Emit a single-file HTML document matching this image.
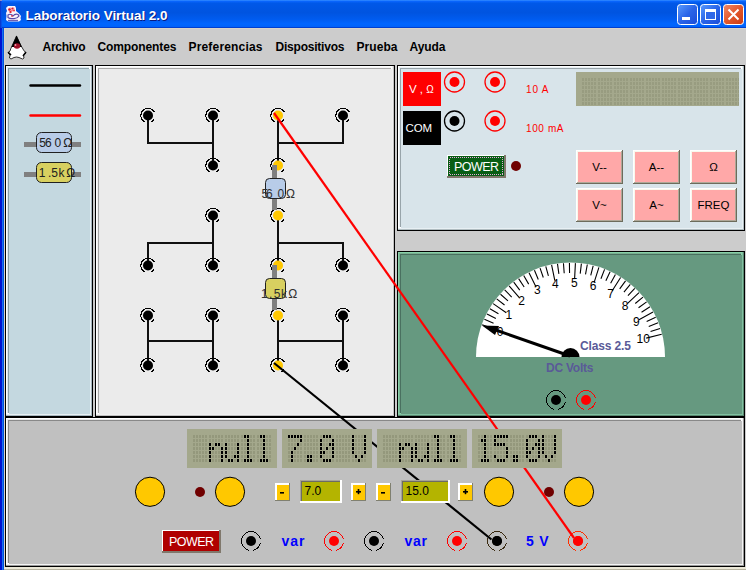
<!DOCTYPE html>
<html><head><meta charset="utf-8"><style>
html,body{margin:0;padding:0;width:746px;height:570px;overflow:hidden;background:#cccccc;font-family:"Liberation Sans",sans-serif}
</style></head><body>
<svg width="746" height="570" viewBox="0 0 746 570" style="position:absolute;left:0;top:0;font-family:'Liberation Sans',sans-serif"><rect x="0" y="0" width="746" height="570" fill="#cccccc" />
<defs>
<linearGradient id="tg" x1="0" y1="0" x2="0" y2="1">
<stop offset="0" stop-color="#3d95ff"/>
<stop offset="0.04" stop-color="#0a66ff"/>
<stop offset="0.12" stop-color="#0058e8"/>
<stop offset="0.45" stop-color="#0054e0"/>
<stop offset="0.7" stop-color="#005cf0"/>
<stop offset="0.85" stop-color="#0066ff"/>
<stop offset="0.95" stop-color="#0062fa"/>
<stop offset="1" stop-color="#0040d8"/>
</linearGradient>
<linearGradient id="lf" x1="0" y1="0" x2="1" y2="0">
<stop offset="0" stop-color="#0018c8"/>
<stop offset="0.5" stop-color="#0030e0"/>
<stop offset="1" stop-color="#1c6cf8"/>
</linearGradient>
<linearGradient id="bb" x1="0" y1="0" x2="1" y2="1">
<stop offset="0" stop-color="#5a9cff"/>
<stop offset="0.5" stop-color="#2a64e8"/>
<stop offset="1" stop-color="#1a4cd8"/>
</linearGradient>
<linearGradient id="cb" x1="0" y1="0" x2="1" y2="1">
<stop offset="0" stop-color="#f08a68"/>
<stop offset="0.5" stop-color="#e2582c"/>
<stop offset="1" stop-color="#cc3a10"/>
</linearGradient>
</defs>
<rect x="0" y="0" width="746" height="28" fill="url(#tg)" />
<rect x="0" y="28" width="2" height="542" fill="#0012d0" />
<rect x="2" y="28" width="1" height="542" fill="#1870f0" />
<rect x="3" y="28" width="1" height="542" fill="#0050e0" />
<rect x="0" y="27" width="746" height="1" fill="#0040d0" />
<rect x="0" y="0" width="1" height="28" fill="#0a3ad0" />
<rect x="1" y="0" width="1" height="28" fill="#0850e8" />
<rect x="0" y="0" width="2" height="1" fill="#8c8cc8" />
<rect x="4" y="28" width="742" height="1" fill="#d8d4c8" />
<rect x="4" y="567" width="742" height="3" fill="#ece9d8" />
<rect x="4" y="569" width="742" height="1" fill="#b8b4a0" />
<rect x="4" y="28" width="1" height="539" fill="#d8d4c8" />
<rect x="677.5" y="4.5" width="20" height="20" rx="3" fill="url(#bb)" stroke="#fff" stroke-width="1"/>
<rect x="700.5" y="4.5" width="20" height="20" rx="3" fill="url(#bb)" stroke="#fff" stroke-width="1"/>
<rect x="723.5" y="4.5" width="20" height="20" rx="3" fill="url(#cb)" stroke="#fff" stroke-width="1"/>
<rect x="682" y="17" width="8" height="3" fill="#fff" />
<rect x="705" y="9" width="11" height="11" fill="#fff" />
<rect x="706" y="12" width="9" height="7" fill="#3068e8" />
<path d="M728.5 9.5 L738.5 19.5 M738.5 9.5 L728.5 19.5" stroke="#fff" stroke-width="2"/>
<text x="26.5" y="21" font-size="13.5" fill="#0a1a80" font-weight="bold" text-anchor="start"  textLength="142" lengthAdjust="spacing">Laboratorio Virtual 2.0</text>
<text x="25.5" y="20" font-size="13.5" fill="#ffffff" font-weight="bold" text-anchor="start"  textLength="142" lengthAdjust="spacing">Laboratorio Virtual 2.0</text>
<g><path d="M6 8 L8 6 L15 6 L16 8 L16 11 L19 13.5 L21 16 L20.5 18 L21 20 L19 21.5 L8 21.5 L6 20 L6.5 16 L6 13 L7 11 Z" fill="#fbf4fb"/><path d="M8 9 L10 7 L12 8 L14 7 L15 9 L13 11 L11 13 L9 12 Z" fill="#f3c0c8"/><circle cx="9.5" cy="9.5" r="1.3" fill="#e01828"/><circle cx="12.5" cy="8.5" r="1.1" fill="#e01828"/><circle cx="14" cy="10.5" r="1" fill="#e83040"/><circle cx="10.5" cy="12" r="1.1" fill="#e01828"/><circle cx="12" cy="10.5" r="0.8" fill="#ff6070"/><path d="M8 15 Q10 13.5 12 15 L13 16 Q15 13.5 18 14.5 L19 16 Q17 19 13 18.5 Q10 19 8 17.5 Z" fill="none" stroke="#5848a8" stroke-width="1.2"/><path d="M8 20.5 L18 20.5" stroke="#7060b0" stroke-width="1.3"/><circle cx="12" cy="16" r="0.9" fill="#e04050"/></g>
<text x="42.5" y="51" font-size="12" fill="#000" font-weight="bold" text-anchor="start"  textLength="43" lengthAdjust="spacing">Archivo</text>
<text x="97.5" y="51" font-size="12" fill="#000" font-weight="bold" text-anchor="start"  textLength="79" lengthAdjust="spacing">Componentes</text>
<text x="188.5" y="51" font-size="12" fill="#000" font-weight="bold" text-anchor="start"  textLength="74" lengthAdjust="spacing">Preferencias</text>
<text x="275.5" y="51" font-size="12" fill="#000" font-weight="bold" text-anchor="start"  textLength="69" lengthAdjust="spacing">Dispositivos</text>
<text x="356.5" y="51" font-size="12" fill="#000" font-weight="bold" text-anchor="start"  textLength="41" lengthAdjust="spacing">Prueba</text>
<text x="409.5" y="51" font-size="12" fill="#000" font-weight="bold" text-anchor="start"  textLength="36" lengthAdjust="spacing">Ayuda</text>
<path d="M16.5 36 L12 46 Q10.5 49 10 51 L8 53 L10 55 L9.5 58 L11 59 L14 57.5 Q16.5 56.5 19 57.5 L22.5 59 L24 58 L23.5 55 L26 53 L23.5 50 Q22.5 48 21 46 Z" fill="#fff" stroke="#000" stroke-width="0.8"/><path d="M16.5 35.5 L11.5 47 L22 47 Z" fill="#000"/><ellipse cx="17" cy="46" rx="3.2" ry="2.8" fill="#a01028"/><circle cx="15.5" cy="45" r="0.9" fill="#e8a0b0"/><path d="M8 52 L11 55 M26 52 L23 56" stroke="#000" stroke-width="1.5"/>
<rect x="5" y="65" width="88" height="352" fill="#000" />
<rect x="6" y="66" width="86" height="350" fill="#a8b8c0" />
<rect x="6" y="66" width="85" height="349" fill="#e8f0f4" />
<rect x="6" y="66" width="84" height="348" fill="#ffffff" />
<rect x="7" y="67" width="82" height="346" fill="#dceaf0" />
<rect x="8" y="68" width="81" height="345" fill="#8ca0a8" />
<rect x="9" y="69" width="81" height="345" fill="#c4d8e0" />
<rect x="95" y="65" width="300" height="352" fill="#000" />
<rect x="96" y="66" width="298" height="350" fill="#c0c0c0" />
<rect x="96" y="66" width="297" height="349" fill="#f0f0f0" />
<rect x="96" y="66" width="296" height="348" fill="#ffffff" />
<rect x="97" y="67" width="294" height="346" fill="#f4f4f4" />
<rect x="98" y="68" width="293" height="345" fill="#a8a8a8" />
<rect x="99" y="69" width="293" height="345" fill="#ebebeb" />
<rect x="397" y="65" width="348" height="166" fill="#000" />
<rect x="398" y="66" width="346" height="164" fill="#b0bcc0" />
<rect x="398" y="66" width="345" height="163" fill="#e8f0f4" />
<rect x="398" y="66" width="344" height="162" fill="#ffffff" />
<rect x="399" y="67" width="342" height="160" fill="#e8f0f4" />
<rect x="400" y="68" width="341" height="159" fill="#98a4aa" />
<rect x="401" y="69" width="341" height="159" fill="#d8e4ea" />
<rect x="397" y="251" width="348" height="166" fill="#000" />
<rect x="398" y="252" width="346" height="164" fill="#5a8870" />
<rect x="398" y="252" width="345" height="163" fill="#80c0a0" />
<rect x="398" y="252" width="344" height="162" fill="#88d0a8" />
<rect x="399" y="253" width="342" height="160" fill="#78b090" />
<rect x="400" y="254" width="341" height="159" fill="#4a7060" />
<rect x="401" y="255" width="341" height="159" fill="#669980" />
<rect x="5" y="417" width="740" height="150" fill="#000" />
<rect x="6" y="418" width="738" height="148" fill="#989898" />
<rect x="6" y="418" width="737" height="147" fill="#f4f4f4" />
<rect x="6" y="418" width="736" height="146" fill="#ffffff" />
<rect x="7" y="419" width="734" height="144" fill="#e8e8e8" />
<rect x="8" y="420" width="733" height="143" fill="#888888" />
<rect x="9" y="421" width="733" height="143" fill="#c0c0c0" />
<line x1="30.5" y1="85.5" x2="80" y2="85.5" stroke="#000" stroke-width="2.4" stroke-linecap="round"/>
<line x1="30.5" y1="115.5" x2="80" y2="115.5" stroke="#ff0000" stroke-width="2.4" stroke-linecap="round"/>
<rect x="24" y="142" width="57" height="5" fill="#808080" />
<rect x="36.5" y="132.5" width="35" height="20" rx="5" fill="#b8cce8" stroke="#202020" stroke-width="1"/>
<text x="39.3 45 54.6 63.2" y="147" font-size="12" fill="#202020">560Ω</text>
<rect x="24" y="172" width="57" height="5" fill="#808080" />
<rect x="36.5" y="162.5" width="35" height="20" rx="5" fill="#d8d060" stroke="#202020" stroke-width="1"/>
<text x="38.8 48 51.2 58.6 66.2" y="177" font-size="12" fill="#202020">1.5kΩ</text>
<line x1="148" y1="115" x2="148" y2="143" stroke="#101010" stroke-width="2" stroke-linecap="square"/>
<line x1="148" y1="143" x2="213" y2="143" stroke="#101010" stroke-width="2" stroke-linecap="square"/>
<line x1="213" y1="115" x2="213" y2="165" stroke="#101010" stroke-width="2" stroke-linecap="square"/>
<line x1="278" y1="115" x2="278" y2="165" stroke="#101010" stroke-width="2" stroke-linecap="square"/>
<line x1="278" y1="143" x2="343" y2="143" stroke="#101010" stroke-width="2" stroke-linecap="square"/>
<line x1="343" y1="143" x2="343" y2="115" stroke="#101010" stroke-width="2" stroke-linecap="square"/>
<line x1="213" y1="215" x2="213" y2="265" stroke="#101010" stroke-width="2" stroke-linecap="square"/>
<line x1="148" y1="243" x2="213" y2="243" stroke="#101010" stroke-width="2" stroke-linecap="square"/>
<line x1="148" y1="243" x2="148" y2="265" stroke="#101010" stroke-width="2" stroke-linecap="square"/>
<line x1="278" y1="215" x2="278" y2="265" stroke="#101010" stroke-width="2" stroke-linecap="square"/>
<line x1="278" y1="243" x2="343" y2="243" stroke="#101010" stroke-width="2" stroke-linecap="square"/>
<line x1="343" y1="243" x2="343" y2="265" stroke="#101010" stroke-width="2" stroke-linecap="square"/>
<line x1="148" y1="315" x2="148" y2="365" stroke="#101010" stroke-width="2" stroke-linecap="square"/>
<line x1="213" y1="315" x2="213" y2="365" stroke="#101010" stroke-width="2" stroke-linecap="square"/>
<line x1="148" y1="341" x2="213" y2="341" stroke="#101010" stroke-width="2" stroke-linecap="square"/>
<line x1="278" y1="315" x2="278" y2="365" stroke="#101010" stroke-width="2" stroke-linecap="square"/>
<line x1="343" y1="315" x2="343" y2="365" stroke="#101010" stroke-width="2" stroke-linecap="square"/>
<line x1="278" y1="341" x2="343" y2="341" stroke="#101010" stroke-width="2" stroke-linecap="square"/>
<path d="M154.53 118.54 A7.2 7.2 0 0 1 151.60 121.74 M144.40 121.74 A7.2 7.2 0 1 1 154.53 112.46" fill="none" stroke="#000" stroke-width="1" shape-rendering="crispEdges"/>
<circle cx="148" cy="115.5" r="5" fill="#000" stroke="none" stroke-width="1" />
<path d="M219.53 118.54 A7.2 7.2 0 0 1 216.60 121.74 M209.40 121.74 A7.2 7.2 0 1 1 219.53 112.46" fill="none" stroke="#000" stroke-width="1" shape-rendering="crispEdges"/>
<circle cx="213" cy="115.5" r="5" fill="#000" stroke="none" stroke-width="1" />
<path d="M284.53 118.54 A7.2 7.2 0 0 1 281.60 121.74 M274.40 121.74 A7.2 7.2 0 1 1 284.53 112.46" fill="none" stroke="#000" stroke-width="1" shape-rendering="crispEdges"/>
<circle cx="278" cy="115.5" r="5" fill="#ffc800" stroke="none" stroke-width="1" />
<path d="M349.53 118.54 A7.2 7.2 0 0 1 346.60 121.74 M339.40 121.74 A7.2 7.2 0 1 1 349.53 112.46" fill="none" stroke="#000" stroke-width="1" shape-rendering="crispEdges"/>
<circle cx="343" cy="115.5" r="5" fill="#000" stroke="none" stroke-width="1" />
<path d="M154.53 268.54 A7.2 7.2 0 0 1 151.60 271.74 M144.40 271.74 A7.2 7.2 0 1 1 154.53 262.46" fill="none" stroke="#000" stroke-width="1" shape-rendering="crispEdges"/>
<circle cx="148" cy="265.5" r="5" fill="#000" stroke="none" stroke-width="1" />
<path d="M219.53 268.54 A7.2 7.2 0 0 1 216.60 271.74 M209.40 271.74 A7.2 7.2 0 1 1 219.53 262.46" fill="none" stroke="#000" stroke-width="1" shape-rendering="crispEdges"/>
<circle cx="213" cy="265.5" r="5" fill="#000" stroke="none" stroke-width="1" />
<path d="M284.53 268.54 A7.2 7.2 0 0 1 281.60 271.74 M274.40 271.74 A7.2 7.2 0 1 1 284.53 262.46" fill="none" stroke="#000" stroke-width="1" shape-rendering="crispEdges"/>
<circle cx="278" cy="265.5" r="5" fill="#ffc800" stroke="none" stroke-width="1" />
<path d="M349.53 268.54 A7.2 7.2 0 0 1 346.60 271.74 M339.40 271.74 A7.2 7.2 0 1 1 349.53 262.46" fill="none" stroke="#000" stroke-width="1" shape-rendering="crispEdges"/>
<circle cx="343" cy="265.5" r="5" fill="#000" stroke="none" stroke-width="1" />
<path d="M154.53 318.54 A7.2 7.2 0 0 1 151.60 321.74 M144.40 321.74 A7.2 7.2 0 1 1 154.53 312.46" fill="none" stroke="#000" stroke-width="1" shape-rendering="crispEdges"/>
<circle cx="148" cy="315.5" r="5" fill="#000" stroke="none" stroke-width="1" />
<path d="M219.53 318.54 A7.2 7.2 0 0 1 216.60 321.74 M209.40 321.74 A7.2 7.2 0 1 1 219.53 312.46" fill="none" stroke="#000" stroke-width="1" shape-rendering="crispEdges"/>
<circle cx="213" cy="315.5" r="5" fill="#000" stroke="none" stroke-width="1" />
<path d="M284.53 318.54 A7.2 7.2 0 0 1 281.60 321.74 M274.40 321.74 A7.2 7.2 0 1 1 284.53 312.46" fill="none" stroke="#000" stroke-width="1" shape-rendering="crispEdges"/>
<circle cx="278" cy="315.5" r="5" fill="#ffc800" stroke="none" stroke-width="1" />
<path d="M349.53 318.54 A7.2 7.2 0 0 1 346.60 321.74 M339.40 321.74 A7.2 7.2 0 1 1 349.53 312.46" fill="none" stroke="#000" stroke-width="1" shape-rendering="crispEdges"/>
<circle cx="343" cy="315.5" r="5" fill="#000" stroke="none" stroke-width="1" />
<path d="M154.53 368.54 A7.2 7.2 0 0 1 151.60 371.74 M144.40 371.74 A7.2 7.2 0 1 1 154.53 362.46" fill="none" stroke="#000" stroke-width="1" shape-rendering="crispEdges"/>
<circle cx="148" cy="365.5" r="5" fill="#000" stroke="none" stroke-width="1" />
<path d="M219.53 368.54 A7.2 7.2 0 0 1 216.60 371.74 M209.40 371.74 A7.2 7.2 0 1 1 219.53 362.46" fill="none" stroke="#000" stroke-width="1" shape-rendering="crispEdges"/>
<circle cx="213" cy="365.5" r="5" fill="#000" stroke="none" stroke-width="1" />
<path d="M284.53 368.54 A7.2 7.2 0 0 1 281.60 371.74 M274.40 371.74 A7.2 7.2 0 1 1 284.53 362.46" fill="none" stroke="#000" stroke-width="1" shape-rendering="crispEdges"/>
<circle cx="278" cy="365.5" r="5" fill="#ffc800" stroke="none" stroke-width="1" />
<path d="M349.53 368.54 A7.2 7.2 0 0 1 346.60 371.74 M339.40 371.74 A7.2 7.2 0 1 1 349.53 362.46" fill="none" stroke="#000" stroke-width="1" shape-rendering="crispEdges"/>
<circle cx="343" cy="365.5" r="5" fill="#000" stroke="none" stroke-width="1" />
<path d="M219.53 168.54 A7.2 7.2 0 0 1 216.60 171.74 M209.40 171.74 A7.2 7.2 0 1 1 219.53 162.46" fill="none" stroke="#000" stroke-width="1" shape-rendering="crispEdges"/>
<circle cx="213" cy="165.5" r="5" fill="#000" stroke="none" stroke-width="1" />
<path d="M284.53 168.54 A7.2 7.2 0 0 1 281.60 171.74 M274.40 171.74 A7.2 7.2 0 1 1 284.53 162.46" fill="none" stroke="#000" stroke-width="1" shape-rendering="crispEdges"/>
<circle cx="278" cy="165.5" r="5" fill="#ffc800" stroke="none" stroke-width="1" />
<path d="M219.53 218.54 A7.2 7.2 0 0 1 216.60 221.74 M209.40 221.74 A7.2 7.2 0 1 1 219.53 212.46" fill="none" stroke="#000" stroke-width="1" shape-rendering="crispEdges"/>
<circle cx="213" cy="215.5" r="5" fill="#000" stroke="none" stroke-width="1" />
<path d="M284.53 218.54 A7.2 7.2 0 0 1 281.60 221.74 M274.40 221.74 A7.2 7.2 0 1 1 284.53 212.46" fill="none" stroke="#000" stroke-width="1" shape-rendering="crispEdges"/>
<circle cx="278" cy="215.5" r="5" fill="#ffc800" stroke="none" stroke-width="1" />
<rect x="272" y="165" width="5" height="45" fill="#808080" />
<rect x="265.5" y="178.5" width="20" height="20" rx="4" fill="#b8cce8" stroke="#202020" stroke-width="1"/>
<text x="261.4 266 277.5 286" y="198" font-size="12" fill="#303030">560Ω</text>
<rect x="272" y="265" width="5" height="45" fill="#808080" />
<rect x="265.5" y="278.5" width="20" height="20" rx="4" fill="#d8d060" stroke="#202020" stroke-width="1"/>
<text x="261 269 273.8 281 288.3" y="298" font-size="12" fill="#303030">1.5kΩ</text>
<rect x="403" y="72" width="38" height="34" fill="#ff0000" />
<text x="409" y="93" font-size="11.5" fill="#fff" font-weight="normal" text-anchor="start" >V ,  <tspan font-size="10">Ω</tspan></text>
<rect x="403" y="111" width="38" height="34" fill="#000" />
<text x="405.5" y="132" font-size="11.5" fill="#fff" font-weight="normal" text-anchor="start"  textLength="26.5" lengthAdjust="spacing">COM</text>
<circle cx="454.5" cy="82" r="10" fill="none" stroke="#ff0000" stroke-width="1.3" />
<circle cx="454.5" cy="82" r="5" fill="#ff0000" stroke="none" stroke-width="1" />
<circle cx="495" cy="82" r="10" fill="none" stroke="#ff0000" stroke-width="1.3" />
<circle cx="495" cy="82" r="5" fill="#ff0000" stroke="none" stroke-width="1" />
<circle cx="454.5" cy="121" r="10" fill="none" stroke="#000" stroke-width="1.3" />
<circle cx="454.5" cy="121" r="5" fill="#000" stroke="none" stroke-width="1" />
<circle cx="495" cy="121" r="10" fill="none" stroke="#ff0000" stroke-width="1.3" />
<circle cx="495" cy="121" r="5" fill="#ff0000" stroke="none" stroke-width="1" />
<text x="526" y="93" font-size="10" fill="#ff0000" font-weight="normal" text-anchor="start"  textLength="22.5" lengthAdjust="spacing">10 A</text>
<text x="526" y="132" font-size="10" fill="#ff0000" font-weight="normal" text-anchor="start"  textLength="37.5" lengthAdjust="spacing">100 mA</text>
<rect x="447" y="155" width="59" height="23" fill="#80786c" />
<rect x="447" y="155" width="57" height="21" fill="#ffffff" />
<rect x="448" y="156" width="56" height="20" fill="#085e14" />
<rect x="449.5" y="157.5" width="53" height="17" fill="none" stroke="#e8a8e0" stroke-width="1" stroke-dasharray="1 1" shape-rendering="crispEdges"/>
<text x="454" y="171" font-size="12.5" fill="#fff" font-weight="normal" text-anchor="start"  textLength="45" lengthAdjust="spacing">POWER</text>
<circle cx="516" cy="166" r="5" fill="#700000" stroke="none" stroke-width="1" />
<rect x="576" y="72" width="163" height="34" fill="#a4a88c" />
<path d="M582 78h2v3h-2zM582 82h2v3h-2zM582 86h2v3h-2zM582 90h2v3h-2zM582 94h2v3h-2zM582 98h2v3h-2zM582 102h2v3h-2zM585 78h2v3h-2zM585 82h2v3h-2zM585 86h2v3h-2zM585 90h2v3h-2zM585 94h2v3h-2zM585 98h2v3h-2zM585 102h2v3h-2zM588 78h2v3h-2zM588 82h2v3h-2zM588 86h2v3h-2zM588 90h2v3h-2zM588 94h2v3h-2zM588 98h2v3h-2zM588 102h2v3h-2zM591 78h2v3h-2zM591 82h2v3h-2zM591 86h2v3h-2zM591 90h2v3h-2zM591 94h2v3h-2zM591 98h2v3h-2zM591 102h2v3h-2zM594 78h2v3h-2zM594 82h2v3h-2zM594 86h2v3h-2zM594 90h2v3h-2zM594 94h2v3h-2zM594 98h2v3h-2zM594 102h2v3h-2zM598 78h2v3h-2zM598 82h2v3h-2zM598 86h2v3h-2zM598 90h2v3h-2zM598 94h2v3h-2zM598 98h2v3h-2zM598 102h2v3h-2zM601 78h2v3h-2zM601 82h2v3h-2zM601 86h2v3h-2zM601 90h2v3h-2zM601 94h2v3h-2zM601 98h2v3h-2zM601 102h2v3h-2zM604 78h2v3h-2zM604 82h2v3h-2zM604 86h2v3h-2zM604 90h2v3h-2zM604 94h2v3h-2zM604 98h2v3h-2zM604 102h2v3h-2zM607 78h2v3h-2zM607 82h2v3h-2zM607 86h2v3h-2zM607 90h2v3h-2zM607 94h2v3h-2zM607 98h2v3h-2zM607 102h2v3h-2zM610 78h2v3h-2zM610 82h2v3h-2zM610 86h2v3h-2zM610 90h2v3h-2zM610 94h2v3h-2zM610 98h2v3h-2zM610 102h2v3h-2zM614 78h2v3h-2zM614 82h2v3h-2zM614 86h2v3h-2zM614 90h2v3h-2zM614 94h2v3h-2zM614 98h2v3h-2zM614 102h2v3h-2zM617 78h2v3h-2zM617 82h2v3h-2zM617 86h2v3h-2zM617 90h2v3h-2zM617 94h2v3h-2zM617 98h2v3h-2zM617 102h2v3h-2zM620 78h2v3h-2zM620 82h2v3h-2zM620 86h2v3h-2zM620 90h2v3h-2zM620 94h2v3h-2zM620 98h2v3h-2zM620 102h2v3h-2zM623 78h2v3h-2zM623 82h2v3h-2zM623 86h2v3h-2zM623 90h2v3h-2zM623 94h2v3h-2zM623 98h2v3h-2zM623 102h2v3h-2zM626 78h2v3h-2zM626 82h2v3h-2zM626 86h2v3h-2zM626 90h2v3h-2zM626 94h2v3h-2zM626 98h2v3h-2zM626 102h2v3h-2zM630 78h2v3h-2zM630 82h2v3h-2zM630 86h2v3h-2zM630 90h2v3h-2zM630 94h2v3h-2zM630 98h2v3h-2zM630 102h2v3h-2zM633 78h2v3h-2zM633 82h2v3h-2zM633 86h2v3h-2zM633 90h2v3h-2zM633 94h2v3h-2zM633 98h2v3h-2zM633 102h2v3h-2zM636 78h2v3h-2zM636 82h2v3h-2zM636 86h2v3h-2zM636 90h2v3h-2zM636 94h2v3h-2zM636 98h2v3h-2zM636 102h2v3h-2zM639 78h2v3h-2zM639 82h2v3h-2zM639 86h2v3h-2zM639 90h2v3h-2zM639 94h2v3h-2zM639 98h2v3h-2zM639 102h2v3h-2zM642 78h2v3h-2zM642 82h2v3h-2zM642 86h2v3h-2zM642 90h2v3h-2zM642 94h2v3h-2zM642 98h2v3h-2zM642 102h2v3h-2zM646 78h2v3h-2zM646 82h2v3h-2zM646 86h2v3h-2zM646 90h2v3h-2zM646 94h2v3h-2zM646 98h2v3h-2zM646 102h2v3h-2zM649 78h2v3h-2zM649 82h2v3h-2zM649 86h2v3h-2zM649 90h2v3h-2zM649 94h2v3h-2zM649 98h2v3h-2zM649 102h2v3h-2zM652 78h2v3h-2zM652 82h2v3h-2zM652 86h2v3h-2zM652 90h2v3h-2zM652 94h2v3h-2zM652 98h2v3h-2zM652 102h2v3h-2zM655 78h2v3h-2zM655 82h2v3h-2zM655 86h2v3h-2zM655 90h2v3h-2zM655 94h2v3h-2zM655 98h2v3h-2zM655 102h2v3h-2zM658 78h2v3h-2zM658 82h2v3h-2zM658 86h2v3h-2zM658 90h2v3h-2zM658 94h2v3h-2zM658 98h2v3h-2zM658 102h2v3h-2zM662 78h2v3h-2zM662 82h2v3h-2zM662 86h2v3h-2zM662 90h2v3h-2zM662 94h2v3h-2zM662 98h2v3h-2zM662 102h2v3h-2zM665 78h2v3h-2zM665 82h2v3h-2zM665 86h2v3h-2zM665 90h2v3h-2zM665 94h2v3h-2zM665 98h2v3h-2zM665 102h2v3h-2zM668 78h2v3h-2zM668 82h2v3h-2zM668 86h2v3h-2zM668 90h2v3h-2zM668 94h2v3h-2zM668 98h2v3h-2zM668 102h2v3h-2zM671 78h2v3h-2zM671 82h2v3h-2zM671 86h2v3h-2zM671 90h2v3h-2zM671 94h2v3h-2zM671 98h2v3h-2zM671 102h2v3h-2zM674 78h2v3h-2zM674 82h2v3h-2zM674 86h2v3h-2zM674 90h2v3h-2zM674 94h2v3h-2zM674 98h2v3h-2zM674 102h2v3h-2zM678 78h2v3h-2zM678 82h2v3h-2zM678 86h2v3h-2zM678 90h2v3h-2zM678 94h2v3h-2zM678 98h2v3h-2zM678 102h2v3h-2zM681 78h2v3h-2zM681 82h2v3h-2zM681 86h2v3h-2zM681 90h2v3h-2zM681 94h2v3h-2zM681 98h2v3h-2zM681 102h2v3h-2zM684 78h2v3h-2zM684 82h2v3h-2zM684 86h2v3h-2zM684 90h2v3h-2zM684 94h2v3h-2zM684 98h2v3h-2zM684 102h2v3h-2zM687 78h2v3h-2zM687 82h2v3h-2zM687 86h2v3h-2zM687 90h2v3h-2zM687 94h2v3h-2zM687 98h2v3h-2zM687 102h2v3h-2zM690 78h2v3h-2zM690 82h2v3h-2zM690 86h2v3h-2zM690 90h2v3h-2zM690 94h2v3h-2zM690 98h2v3h-2zM690 102h2v3h-2zM694 78h2v3h-2zM694 82h2v3h-2zM694 86h2v3h-2zM694 90h2v3h-2zM694 94h2v3h-2zM694 98h2v3h-2zM694 102h2v3h-2zM697 78h2v3h-2zM697 82h2v3h-2zM697 86h2v3h-2zM697 90h2v3h-2zM697 94h2v3h-2zM697 98h2v3h-2zM697 102h2v3h-2zM700 78h2v3h-2zM700 82h2v3h-2zM700 86h2v3h-2zM700 90h2v3h-2zM700 94h2v3h-2zM700 98h2v3h-2zM700 102h2v3h-2zM703 78h2v3h-2zM703 82h2v3h-2zM703 86h2v3h-2zM703 90h2v3h-2zM703 94h2v3h-2zM703 98h2v3h-2zM703 102h2v3h-2zM706 78h2v3h-2zM706 82h2v3h-2zM706 86h2v3h-2zM706 90h2v3h-2zM706 94h2v3h-2zM706 98h2v3h-2zM706 102h2v3h-2zM710 78h2v3h-2zM710 82h2v3h-2zM710 86h2v3h-2zM710 90h2v3h-2zM710 94h2v3h-2zM710 98h2v3h-2zM710 102h2v3h-2zM713 78h2v3h-2zM713 82h2v3h-2zM713 86h2v3h-2zM713 90h2v3h-2zM713 94h2v3h-2zM713 98h2v3h-2zM713 102h2v3h-2zM716 78h2v3h-2zM716 82h2v3h-2zM716 86h2v3h-2zM716 90h2v3h-2zM716 94h2v3h-2zM716 98h2v3h-2zM716 102h2v3h-2zM719 78h2v3h-2zM719 82h2v3h-2zM719 86h2v3h-2zM719 90h2v3h-2zM719 94h2v3h-2zM719 98h2v3h-2zM719 102h2v3h-2zM722 78h2v3h-2zM722 82h2v3h-2zM722 86h2v3h-2zM722 90h2v3h-2zM722 94h2v3h-2zM722 98h2v3h-2zM722 102h2v3h-2zM726 78h2v3h-2zM726 82h2v3h-2zM726 86h2v3h-2zM726 90h2v3h-2zM726 94h2v3h-2zM726 98h2v3h-2zM726 102h2v3h-2zM729 78h2v3h-2zM729 82h2v3h-2zM729 86h2v3h-2zM729 90h2v3h-2zM729 94h2v3h-2zM729 98h2v3h-2zM729 102h2v3h-2zM732 78h2v3h-2zM732 82h2v3h-2zM732 86h2v3h-2zM732 90h2v3h-2zM732 94h2v3h-2zM732 98h2v3h-2zM732 102h2v3h-2zM735 78h2v3h-2zM735 82h2v3h-2zM735 86h2v3h-2zM735 90h2v3h-2zM735 94h2v3h-2zM735 98h2v3h-2zM735 102h2v3h-2zM738 78h1v3h-1zM738 82h1v3h-1zM738 86h1v3h-1zM738 90h1v3h-1zM738 94h1v3h-1zM738 98h1v3h-1zM738 102h1v3h-1z" fill="#989c80"/>
<rect x="576" y="150" width="47" height="34" fill="#6c6c5c" />
<rect x="576" y="150" width="46" height="33" fill="#ffffff" />
<rect x="577" y="151" width="45" height="32" fill="#b0a898" />
<rect x="577" y="151" width="44" height="31" fill="#f8f8ec" />
<rect x="578" y="152" width="43" height="30" fill="#ffa8a8" />
<text x="599.5" y="171.0" font-size="11.5" fill="#000" font-weight="normal" text-anchor="middle" >V--</text>
<rect x="576" y="188" width="47" height="34" fill="#6c6c5c" />
<rect x="576" y="188" width="46" height="33" fill="#ffffff" />
<rect x="577" y="189" width="45" height="32" fill="#b0a898" />
<rect x="577" y="189" width="44" height="31" fill="#f8f8ec" />
<rect x="578" y="190" width="43" height="30" fill="#ffa8a8" />
<text x="599.5" y="209.0" font-size="11.5" fill="#000" font-weight="normal" text-anchor="middle" >V~</text>
<rect x="633" y="150" width="47" height="34" fill="#6c6c5c" />
<rect x="633" y="150" width="46" height="33" fill="#ffffff" />
<rect x="634" y="151" width="45" height="32" fill="#b0a898" />
<rect x="634" y="151" width="44" height="31" fill="#f8f8ec" />
<rect x="635" y="152" width="43" height="30" fill="#ffa8a8" />
<text x="656.5" y="171.0" font-size="11.5" fill="#000" font-weight="normal" text-anchor="middle" >A--</text>
<rect x="633" y="188" width="47" height="34" fill="#6c6c5c" />
<rect x="633" y="188" width="46" height="33" fill="#ffffff" />
<rect x="634" y="189" width="45" height="32" fill="#b0a898" />
<rect x="634" y="189" width="44" height="31" fill="#f8f8ec" />
<rect x="635" y="190" width="43" height="30" fill="#ffa8a8" />
<text x="656.5" y="209.0" font-size="11.5" fill="#000" font-weight="normal" text-anchor="middle" >A~</text>
<rect x="690" y="150" width="47" height="34" fill="#6c6c5c" />
<rect x="690" y="150" width="46" height="33" fill="#ffffff" />
<rect x="691" y="151" width="45" height="32" fill="#b0a898" />
<rect x="691" y="151" width="44" height="31" fill="#f8f8ec" />
<rect x="692" y="152" width="43" height="30" fill="#ffa8a8" />
<text x="713.5" y="171.0" font-size="11.5" fill="#000" font-weight="normal" text-anchor="middle" >Ω</text>
<rect x="690" y="188" width="47" height="34" fill="#6c6c5c" />
<rect x="690" y="188" width="46" height="33" fill="#ffffff" />
<rect x="691" y="189" width="45" height="32" fill="#b0a898" />
<rect x="691" y="189" width="44" height="31" fill="#f8f8ec" />
<rect x="692" y="190" width="43" height="30" fill="#ffa8a8" />
<text x="713.5" y="209.0" font-size="11.5" fill="#000" font-weight="normal" text-anchor="middle" >FREQ</text>
<path d="M476.0 357 A94.5 94.5 0 0 1 665.0 357 Z" fill="#fff"/>
<path d="M497.20 330.32L482.17 324.85M493.55 323.30L484.39 319.29M495.86 318.47L486.97 313.89M498.46 313.80L489.88 308.66M506.30 312.71L493.13 303.62M504.53 305.00L496.68 298.81M507.98 300.90L500.53 294.22M511.68 297.04L504.67 289.90M519.53 297.95L509.08 285.84M519.77 290.05L513.73 282.08M524.14 286.95L518.62 278.61M528.69 284.14L523.71 275.47M536.06 287.01L529.00 272.66M538.29 279.42L534.45 270.19M543.29 277.53L540.05 268.07M548.41 275.96L545.78 266.31M554.82 280.59L551.60 264.92M558.88 273.81L557.50 263.90M564.20 273.24L563.45 263.26M569.55 273.01L569.43 263.01M574.58 279.11L575.42 263.13M580.23 273.57L581.39 263.63M585.52 274.35L587.31 264.51M590.75 275.48L593.16 265.77M594.08 282.65L598.92 267.40M600.94 278.71L604.57 269.39M605.87 280.81L610.08 271.74M610.65 283.21L615.42 274.43M612.06 291.00L620.59 277.46M619.70 288.91L625.55 280.81M623.93 292.18L630.29 284.47M627.95 295.72L634.79 288.42M627.36 303.61L639.02 292.65M635.27 303.51L642.98 297.15M638.54 307.74L646.64 301.88M641.54 312.18L650.00 306.84M638.98 319.66L653.03 312.00M646.66 321.57L655.73 317.35M648.76 326.49L658.08 322.85M650.55 331.53L660.08 328.50M646.18 338.13L661.71 334.26" stroke="#000" stroke-width="1.1" fill="none"/>
<text x="500.0" y="335.8" font-size="12" fill="#000" font-weight="normal" text-anchor="middle" >0</text>
<text x="508.8" y="318.9" font-size="12" fill="#000" font-weight="normal" text-anchor="middle" >1</text>
<text x="521.5" y="304.7" font-size="12" fill="#000" font-weight="normal" text-anchor="middle" >2</text>
<text x="537.4" y="294.2" font-size="12" fill="#000" font-weight="normal" text-anchor="middle" >3</text>
<text x="555.4" y="288.0" font-size="12" fill="#000" font-weight="normal" text-anchor="middle" >4</text>
<text x="574.4" y="286.6" font-size="12" fill="#000" font-weight="normal" text-anchor="middle" >5</text>
<text x="593.2" y="290.0" font-size="12" fill="#000" font-weight="normal" text-anchor="middle" >6</text>
<text x="610.5" y="298.0" font-size="12" fill="#000" font-weight="normal" text-anchor="middle" >7</text>
<text x="625.2" y="310.2" font-size="12" fill="#000" font-weight="normal" text-anchor="middle" >8</text>
<text x="636.3" y="325.6" font-size="12" fill="#000" font-weight="normal" text-anchor="middle" >9</text>
<text x="643.3" y="343.4" font-size="12" fill="#000" font-weight="normal" text-anchor="middle" >10</text>
<text x="580" y="350" font-size="12" fill="#5a5a98" font-weight="bold" text-anchor="start"  textLength="51" lengthAdjust="spacing">Class 2.5</text>
<text x="546" y="372" font-size="12" fill="#5a5a98" font-weight="bold" text-anchor="start"  textLength="47.5" lengthAdjust="spacing">DC Volts</text>
<line x1="570" y1="356" x2="490" y2="328" stroke="#000" stroke-width="3"/>
<path d="M482 325.5 L499 326 L495 335 Z" fill="#000"/>
<path d="M561.5 357 A9 9 0 0 1 579.5 357 Z" fill="#000"/>
<path d="M565.29 401.98 A9.5 9.5 0 0 1 557.98 409.29 M554.02 409.29 A9.5 9.5 0 1 1 565.29 398.02" fill="none" stroke="#000" stroke-width="1" shape-rendering="crispEdges"/>
<circle cx="556" cy="400" r="5" fill="#000" stroke="none" stroke-width="1" />
<path d="M595.29 401.98 A9.5 9.5 0 0 1 587.98 409.29 M584.02 409.29 A9.5 9.5 0 1 1 595.29 398.02" fill="none" stroke="#ff0000" stroke-width="1" shape-rendering="crispEdges"/>
<circle cx="586" cy="400" r="5" fill="#ff0000" stroke="none" stroke-width="1" />
<circle cx="150" cy="491.8" r="14.6" fill="#ffc800" stroke="#000" stroke-width="1" />
<circle cx="230" cy="491.8" r="14.6" fill="#ffc800" stroke="#000" stroke-width="1" />
<circle cx="499" cy="491.8" r="14.6" fill="#ffc800" stroke="#000" stroke-width="1" />
<circle cx="579" cy="491.8" r="14.6" fill="#ffc800" stroke="#000" stroke-width="1" />
<circle cx="200" cy="492" r="5" fill="#700000" stroke="none" stroke-width="1" />
<circle cx="549" cy="492" r="5" fill="#700000" stroke="none" stroke-width="1" />
<rect x="275" y="483" width="15" height="18" fill="#808070" />
<rect x="275" y="483" width="14" height="17" fill="#ffffff" />
<rect x="277" y="485" width="12" height="15" fill="#ffc800" />
<rect x="280" y="492" width="4" height="1.6" fill="#000" />
<rect x="351" y="483" width="15" height="18" fill="#808070" />
<rect x="351" y="483" width="14" height="17" fill="#ffffff" />
<rect x="353" y="485" width="12" height="15" fill="#ffc800" />
<rect x="356" y="491" width="5" height="1.6" fill="#000" />
<rect x="357.7" y="489" width="1.6" height="5.2" fill="#000" />
<rect x="376" y="483" width="15" height="18" fill="#808070" />
<rect x="376" y="483" width="14" height="17" fill="#ffffff" />
<rect x="378" y="485" width="12" height="15" fill="#ffc800" />
<rect x="381" y="492" width="4" height="1.6" fill="#000" />
<rect x="458" y="483" width="15" height="18" fill="#808070" />
<rect x="458" y="483" width="14" height="17" fill="#ffffff" />
<rect x="460" y="485" width="12" height="15" fill="#ffc800" />
<rect x="463" y="491" width="5" height="1.6" fill="#000" />
<rect x="464.7" y="489" width="1.6" height="5.2" fill="#000" />
<rect x="162" y="530" width="59" height="23" fill="#80786c" />
<rect x="162" y="530" width="57" height="21" fill="#ffffff" />
<rect x="163" y="531" width="56" height="20" fill="#b00000" />
<text x="169" y="546" font-size="12.5" fill="#fff" font-weight="normal" text-anchor="start"  textLength="45" lengthAdjust="spacing">POWER</text>
<path d="M260.29 542.98 A9.5 9.5 0 0 1 252.98 550.29 M249.02 550.29 A9.5 9.5 0 1 1 260.29 539.02" fill="none" stroke="#000" stroke-width="1" shape-rendering="crispEdges"/>
<circle cx="251" cy="541" r="5" fill="#000" stroke="none" stroke-width="1" />
<path d="M343.29 542.98 A9.5 9.5 0 0 1 335.98 550.29 M332.02 550.29 A9.5 9.5 0 1 1 343.29 539.02" fill="none" stroke="#ff0000" stroke-width="1" shape-rendering="crispEdges"/>
<circle cx="334" cy="541" r="5" fill="#ff0000" stroke="none" stroke-width="1" />
<path d="M383.29 542.98 A9.5 9.5 0 0 1 375.98 550.29 M372.02 550.29 A9.5 9.5 0 1 1 383.29 539.02" fill="none" stroke="#000" stroke-width="1" shape-rendering="crispEdges"/>
<circle cx="374" cy="541" r="5" fill="#000" stroke="none" stroke-width="1" />
<path d="M466.29 542.98 A9.5 9.5 0 0 1 458.98 550.29 M455.02 550.29 A9.5 9.5 0 1 1 466.29 539.02" fill="none" stroke="#ff0000" stroke-width="1" shape-rendering="crispEdges"/>
<circle cx="457" cy="541" r="5" fill="#ff0000" stroke="none" stroke-width="1" />
<path d="M506.29 542.98 A9.5 9.5 0 0 1 498.98 550.29 M495.02 550.29 A9.5 9.5 0 1 1 506.29 539.02" fill="none" stroke="#3a2a10" stroke-width="1" shape-rendering="crispEdges"/>
<circle cx="497" cy="541" r="5" fill="#3a2a10" stroke="none" stroke-width="1" />
<circle cx="497" cy="541" r="5" fill="#000" stroke="none" stroke-width="1" />
<path d="M587.29 542.98 A9.5 9.5 0 0 1 579.98 550.29 M576.02 550.29 A9.5 9.5 0 1 1 587.29 539.02" fill="none" stroke="#ff3000" stroke-width="1" shape-rendering="crispEdges"/>
<circle cx="578" cy="541" r="5" fill="#ff3000" stroke="none" stroke-width="1" />
<circle cx="578" cy="541" r="5" fill="#ff0000" stroke="none" stroke-width="1" />
<text x="281.5" y="546" font-size="14" fill="#0000ff" font-weight="bold" text-anchor="start"  textLength="23" lengthAdjust="spacing">var</text>
<text x="404.5" y="546" font-size="14" fill="#0000ff" font-weight="bold" text-anchor="start"  textLength="22.5" lengthAdjust="spacing">var</text>
<text x="526" y="546" font-size="14" fill="#0000ff" font-weight="bold" text-anchor="start"  textLength="22.5" lengthAdjust="spacing">5 V</text>
<line x1="274" y1="113" x2="574" y2="538" stroke="#ff0000" stroke-width="2.2" />
<line x1="274" y1="363" x2="491.5" y2="539.5" stroke="#000" stroke-width="2.2" />
<rect x="187" y="429" width="90" height="39" fill="#a4a88c" />
<path d="M193 435h2v3h-2zM196 435h2v3h-2zM199 435h2v3h-2zM202 435h2v3h-2zM205 435h2v3h-2zM193 439h2v3h-2zM196 439h2v3h-2zM199 439h2v3h-2zM202 439h2v3h-2zM205 439h2v3h-2zM193 443h2v3h-2zM196 443h2v3h-2zM199 443h2v3h-2zM202 443h2v3h-2zM205 443h2v3h-2zM193 447h2v3h-2zM196 447h2v3h-2zM199 447h2v3h-2zM202 447h2v3h-2zM205 447h2v3h-2zM193 451h2v3h-2zM196 451h2v3h-2zM199 451h2v3h-2zM202 451h2v3h-2zM205 451h2v3h-2zM193 455h2v3h-2zM196 455h2v3h-2zM199 455h2v3h-2zM202 455h2v3h-2zM205 455h2v3h-2zM193 459h2v3h-2zM196 459h2v3h-2zM199 459h2v3h-2zM202 459h2v3h-2zM205 459h2v3h-2zM209 435h2v3h-2zM212 435h2v3h-2zM215 435h2v3h-2zM218 435h2v3h-2zM221 435h2v3h-2zM209 439h2v3h-2zM212 439h2v3h-2zM215 439h2v3h-2zM218 439h2v3h-2zM221 439h2v3h-2zM212 443h2v3h-2zM221 443h2v3h-2zM215 447h2v3h-2zM218 447h2v3h-2zM212 451h2v3h-2zM215 451h2v3h-2zM218 451h2v3h-2zM212 455h2v3h-2zM215 455h2v3h-2zM218 455h2v3h-2zM212 459h2v3h-2zM215 459h2v3h-2zM218 459h2v3h-2zM225 435h2v3h-2zM228 435h2v3h-2zM231 435h2v3h-2zM234 435h2v3h-2zM237 435h2v3h-2zM225 439h2v3h-2zM228 439h2v3h-2zM231 439h2v3h-2zM234 439h2v3h-2zM237 439h2v3h-2zM228 443h2v3h-2zM231 443h2v3h-2zM234 443h2v3h-2zM228 447h2v3h-2zM231 447h2v3h-2zM234 447h2v3h-2zM228 451h2v3h-2zM231 451h2v3h-2zM234 451h2v3h-2zM228 455h2v3h-2zM231 455h2v3h-2zM225 459h2v3h-2zM234 459h2v3h-2zM241 435h2v3h-2zM250 435h2v3h-2zM253 435h2v3h-2zM241 439h2v3h-2zM244 439h2v3h-2zM250 439h2v3h-2zM253 439h2v3h-2zM241 443h2v3h-2zM244 443h2v3h-2zM250 443h2v3h-2zM253 443h2v3h-2zM241 447h2v3h-2zM244 447h2v3h-2zM250 447h2v3h-2zM253 447h2v3h-2zM241 451h2v3h-2zM244 451h2v3h-2zM250 451h2v3h-2zM253 451h2v3h-2zM241 455h2v3h-2zM244 455h2v3h-2zM250 455h2v3h-2zM253 455h2v3h-2zM241 459h2v3h-2zM253 459h2v3h-2zM257 435h2v3h-2zM266 435h2v3h-2zM269 435h2v3h-2zM257 439h2v3h-2zM260 439h2v3h-2zM266 439h2v3h-2zM269 439h2v3h-2zM257 443h2v3h-2zM260 443h2v3h-2zM266 443h2v3h-2zM269 443h2v3h-2zM257 447h2v3h-2zM260 447h2v3h-2zM266 447h2v3h-2zM269 447h2v3h-2zM257 451h2v3h-2zM260 451h2v3h-2zM266 451h2v3h-2zM269 451h2v3h-2zM257 455h2v3h-2zM260 455h2v3h-2zM266 455h2v3h-2zM269 455h2v3h-2zM257 459h2v3h-2zM269 459h2v3h-2z" fill="#94987c"/>
<path d="M209 443h2v3h-2zM215 443h2v3h-2zM218 443h2v3h-2zM209 447h2v3h-2zM212 447h2v3h-2zM221 447h2v3h-2zM209 451h2v3h-2zM221 451h2v3h-2zM209 455h2v3h-2zM221 455h2v3h-2zM209 459h2v3h-2zM221 459h2v3h-2zM225 443h2v3h-2zM237 443h2v3h-2zM225 447h2v3h-2zM237 447h2v3h-2zM225 451h2v3h-2zM237 451h2v3h-2zM225 455h2v3h-2zM234 455h2v3h-2zM237 455h2v3h-2zM228 459h2v3h-2zM231 459h2v3h-2zM237 459h2v3h-2zM244 435h2v3h-2zM247 435h2v3h-2zM247 439h2v3h-2zM247 443h2v3h-2zM247 447h2v3h-2zM247 451h2v3h-2zM247 455h2v3h-2zM244 459h2v3h-2zM247 459h2v3h-2zM250 459h2v3h-2zM260 435h2v3h-2zM263 435h2v3h-2zM263 439h2v3h-2zM263 443h2v3h-2zM263 447h2v3h-2zM263 451h2v3h-2zM263 455h2v3h-2zM260 459h2v3h-2zM263 459h2v3h-2zM266 459h2v3h-2z" fill="#000"/>
<rect x="282" y="429" width="90" height="39" fill="#a4a88c" />
<path d="M288 439h2v3h-2zM291 439h2v3h-2zM294 439h2v3h-2zM297 439h2v3h-2zM288 443h2v3h-2zM291 443h2v3h-2zM294 443h2v3h-2zM300 443h2v3h-2zM288 447h2v3h-2zM291 447h2v3h-2zM297 447h2v3h-2zM300 447h2v3h-2zM288 451h2v3h-2zM294 451h2v3h-2zM297 451h2v3h-2zM300 451h2v3h-2zM288 455h2v3h-2zM294 455h2v3h-2zM297 455h2v3h-2zM300 455h2v3h-2zM288 459h2v3h-2zM294 459h2v3h-2zM297 459h2v3h-2zM300 459h2v3h-2zM304 435h2v3h-2zM307 435h2v3h-2zM310 435h2v3h-2zM313 435h2v3h-2zM316 435h2v3h-2zM304 439h2v3h-2zM307 439h2v3h-2zM310 439h2v3h-2zM313 439h2v3h-2zM316 439h2v3h-2zM304 443h2v3h-2zM307 443h2v3h-2zM310 443h2v3h-2zM313 443h2v3h-2zM316 443h2v3h-2zM304 447h2v3h-2zM307 447h2v3h-2zM310 447h2v3h-2zM313 447h2v3h-2zM316 447h2v3h-2zM304 451h2v3h-2zM307 451h2v3h-2zM310 451h2v3h-2zM313 451h2v3h-2zM316 451h2v3h-2zM304 455h2v3h-2zM313 455h2v3h-2zM316 455h2v3h-2zM304 459h2v3h-2zM313 459h2v3h-2zM316 459h2v3h-2zM320 435h2v3h-2zM332 435h2v3h-2zM323 439h2v3h-2zM326 439h2v3h-2zM329 439h2v3h-2zM323 443h2v3h-2zM326 443h2v3h-2zM323 447h2v3h-2zM329 447h2v3h-2zM326 451h2v3h-2zM329 451h2v3h-2zM323 455h2v3h-2zM326 455h2v3h-2zM329 455h2v3h-2zM320 459h2v3h-2zM332 459h2v3h-2zM336 435h2v3h-2zM339 435h2v3h-2zM342 435h2v3h-2zM345 435h2v3h-2zM348 435h2v3h-2zM336 439h2v3h-2zM339 439h2v3h-2zM342 439h2v3h-2zM345 439h2v3h-2zM348 439h2v3h-2zM336 443h2v3h-2zM339 443h2v3h-2zM342 443h2v3h-2zM345 443h2v3h-2zM348 443h2v3h-2zM336 447h2v3h-2zM339 447h2v3h-2zM342 447h2v3h-2zM345 447h2v3h-2zM348 447h2v3h-2zM336 451h2v3h-2zM339 451h2v3h-2zM342 451h2v3h-2zM345 451h2v3h-2zM348 451h2v3h-2zM336 455h2v3h-2zM339 455h2v3h-2zM342 455h2v3h-2zM345 455h2v3h-2zM348 455h2v3h-2zM336 459h2v3h-2zM339 459h2v3h-2zM342 459h2v3h-2zM345 459h2v3h-2zM348 459h2v3h-2zM355 435h2v3h-2zM358 435h2v3h-2zM361 435h2v3h-2zM355 439h2v3h-2zM358 439h2v3h-2zM361 439h2v3h-2zM355 443h2v3h-2zM358 443h2v3h-2zM361 443h2v3h-2zM355 447h2v3h-2zM358 447h2v3h-2zM361 447h2v3h-2zM355 451h2v3h-2zM358 451h2v3h-2zM361 451h2v3h-2zM352 455h2v3h-2zM358 455h2v3h-2zM364 455h2v3h-2zM352 459h2v3h-2zM355 459h2v3h-2zM361 459h2v3h-2zM364 459h2v3h-2z" fill="#94987c"/>
<path d="M288 435h2v3h-2zM291 435h2v3h-2zM294 435h2v3h-2zM297 435h2v3h-2zM300 435h2v3h-2zM300 439h2v3h-2zM297 443h2v3h-2zM294 447h2v3h-2zM291 451h2v3h-2zM291 455h2v3h-2zM291 459h2v3h-2zM307 455h2v3h-2zM310 455h2v3h-2zM307 459h2v3h-2zM310 459h2v3h-2zM323 435h2v3h-2zM326 435h2v3h-2zM329 435h2v3h-2zM320 439h2v3h-2zM332 439h2v3h-2zM320 443h2v3h-2zM329 443h2v3h-2zM332 443h2v3h-2zM320 447h2v3h-2zM326 447h2v3h-2zM332 447h2v3h-2zM320 451h2v3h-2zM323 451h2v3h-2zM332 451h2v3h-2zM320 455h2v3h-2zM332 455h2v3h-2zM323 459h2v3h-2zM326 459h2v3h-2zM329 459h2v3h-2zM352 435h2v3h-2zM364 435h2v3h-2zM352 439h2v3h-2zM364 439h2v3h-2zM352 443h2v3h-2zM364 443h2v3h-2zM352 447h2v3h-2zM364 447h2v3h-2zM352 451h2v3h-2zM364 451h2v3h-2zM355 455h2v3h-2zM361 455h2v3h-2zM358 459h2v3h-2z" fill="#000"/>
<rect x="377" y="429" width="90" height="39" fill="#a4a88c" />
<path d="M383 435h2v3h-2zM386 435h2v3h-2zM389 435h2v3h-2zM392 435h2v3h-2zM395 435h2v3h-2zM383 439h2v3h-2zM386 439h2v3h-2zM389 439h2v3h-2zM392 439h2v3h-2zM395 439h2v3h-2zM383 443h2v3h-2zM386 443h2v3h-2zM389 443h2v3h-2zM392 443h2v3h-2zM395 443h2v3h-2zM383 447h2v3h-2zM386 447h2v3h-2zM389 447h2v3h-2zM392 447h2v3h-2zM395 447h2v3h-2zM383 451h2v3h-2zM386 451h2v3h-2zM389 451h2v3h-2zM392 451h2v3h-2zM395 451h2v3h-2zM383 455h2v3h-2zM386 455h2v3h-2zM389 455h2v3h-2zM392 455h2v3h-2zM395 455h2v3h-2zM383 459h2v3h-2zM386 459h2v3h-2zM389 459h2v3h-2zM392 459h2v3h-2zM395 459h2v3h-2zM399 435h2v3h-2zM402 435h2v3h-2zM405 435h2v3h-2zM408 435h2v3h-2zM411 435h2v3h-2zM399 439h2v3h-2zM402 439h2v3h-2zM405 439h2v3h-2zM408 439h2v3h-2zM411 439h2v3h-2zM402 443h2v3h-2zM411 443h2v3h-2zM405 447h2v3h-2zM408 447h2v3h-2zM402 451h2v3h-2zM405 451h2v3h-2zM408 451h2v3h-2zM402 455h2v3h-2zM405 455h2v3h-2zM408 455h2v3h-2zM402 459h2v3h-2zM405 459h2v3h-2zM408 459h2v3h-2zM415 435h2v3h-2zM418 435h2v3h-2zM421 435h2v3h-2zM424 435h2v3h-2zM427 435h2v3h-2zM415 439h2v3h-2zM418 439h2v3h-2zM421 439h2v3h-2zM424 439h2v3h-2zM427 439h2v3h-2zM418 443h2v3h-2zM421 443h2v3h-2zM424 443h2v3h-2zM418 447h2v3h-2zM421 447h2v3h-2zM424 447h2v3h-2zM418 451h2v3h-2zM421 451h2v3h-2zM424 451h2v3h-2zM418 455h2v3h-2zM421 455h2v3h-2zM415 459h2v3h-2zM424 459h2v3h-2zM431 435h2v3h-2zM440 435h2v3h-2zM443 435h2v3h-2zM431 439h2v3h-2zM434 439h2v3h-2zM440 439h2v3h-2zM443 439h2v3h-2zM431 443h2v3h-2zM434 443h2v3h-2zM440 443h2v3h-2zM443 443h2v3h-2zM431 447h2v3h-2zM434 447h2v3h-2zM440 447h2v3h-2zM443 447h2v3h-2zM431 451h2v3h-2zM434 451h2v3h-2zM440 451h2v3h-2zM443 451h2v3h-2zM431 455h2v3h-2zM434 455h2v3h-2zM440 455h2v3h-2zM443 455h2v3h-2zM431 459h2v3h-2zM443 459h2v3h-2zM447 435h2v3h-2zM456 435h2v3h-2zM459 435h2v3h-2zM447 439h2v3h-2zM450 439h2v3h-2zM456 439h2v3h-2zM459 439h2v3h-2zM447 443h2v3h-2zM450 443h2v3h-2zM456 443h2v3h-2zM459 443h2v3h-2zM447 447h2v3h-2zM450 447h2v3h-2zM456 447h2v3h-2zM459 447h2v3h-2zM447 451h2v3h-2zM450 451h2v3h-2zM456 451h2v3h-2zM459 451h2v3h-2zM447 455h2v3h-2zM450 455h2v3h-2zM456 455h2v3h-2zM459 455h2v3h-2zM447 459h2v3h-2zM459 459h2v3h-2z" fill="#94987c"/>
<path d="M399 443h2v3h-2zM405 443h2v3h-2zM408 443h2v3h-2zM399 447h2v3h-2zM402 447h2v3h-2zM411 447h2v3h-2zM399 451h2v3h-2zM411 451h2v3h-2zM399 455h2v3h-2zM411 455h2v3h-2zM399 459h2v3h-2zM411 459h2v3h-2zM415 443h2v3h-2zM427 443h2v3h-2zM415 447h2v3h-2zM427 447h2v3h-2zM415 451h2v3h-2zM427 451h2v3h-2zM415 455h2v3h-2zM424 455h2v3h-2zM427 455h2v3h-2zM418 459h2v3h-2zM421 459h2v3h-2zM427 459h2v3h-2zM434 435h2v3h-2zM437 435h2v3h-2zM437 439h2v3h-2zM437 443h2v3h-2zM437 447h2v3h-2zM437 451h2v3h-2zM437 455h2v3h-2zM434 459h2v3h-2zM437 459h2v3h-2zM440 459h2v3h-2zM450 435h2v3h-2zM453 435h2v3h-2zM453 439h2v3h-2zM453 443h2v3h-2zM453 447h2v3h-2zM453 451h2v3h-2zM453 455h2v3h-2zM450 459h2v3h-2zM453 459h2v3h-2zM456 459h2v3h-2z" fill="#000"/>
<rect x="472" y="429" width="90" height="39" fill="#a4a88c" />
<path d="M478 435h2v3h-2zM481 435h2v3h-2zM487 435h2v3h-2zM490 435h2v3h-2zM478 439h2v3h-2zM487 439h2v3h-2zM490 439h2v3h-2zM478 443h2v3h-2zM481 443h2v3h-2zM487 443h2v3h-2zM490 443h2v3h-2zM478 447h2v3h-2zM481 447h2v3h-2zM487 447h2v3h-2zM490 447h2v3h-2zM478 451h2v3h-2zM481 451h2v3h-2zM487 451h2v3h-2zM490 451h2v3h-2zM478 455h2v3h-2zM481 455h2v3h-2zM487 455h2v3h-2zM490 455h2v3h-2zM478 459h2v3h-2zM490 459h2v3h-2zM497 439h2v3h-2zM500 439h2v3h-2zM503 439h2v3h-2zM506 439h2v3h-2zM506 443h2v3h-2zM494 447h2v3h-2zM497 447h2v3h-2zM500 447h2v3h-2zM503 447h2v3h-2zM494 451h2v3h-2zM497 451h2v3h-2zM500 451h2v3h-2zM503 451h2v3h-2zM497 455h2v3h-2zM500 455h2v3h-2zM503 455h2v3h-2zM494 459h2v3h-2zM506 459h2v3h-2zM510 435h2v3h-2zM513 435h2v3h-2zM516 435h2v3h-2zM519 435h2v3h-2zM522 435h2v3h-2zM510 439h2v3h-2zM513 439h2v3h-2zM516 439h2v3h-2zM519 439h2v3h-2zM522 439h2v3h-2zM510 443h2v3h-2zM513 443h2v3h-2zM516 443h2v3h-2zM519 443h2v3h-2zM522 443h2v3h-2zM510 447h2v3h-2zM513 447h2v3h-2zM516 447h2v3h-2zM519 447h2v3h-2zM522 447h2v3h-2zM510 451h2v3h-2zM513 451h2v3h-2zM516 451h2v3h-2zM519 451h2v3h-2zM522 451h2v3h-2zM510 455h2v3h-2zM519 455h2v3h-2zM522 455h2v3h-2zM510 459h2v3h-2zM519 459h2v3h-2zM522 459h2v3h-2zM526 435h2v3h-2zM538 435h2v3h-2zM529 439h2v3h-2zM532 439h2v3h-2zM535 439h2v3h-2zM529 443h2v3h-2zM532 443h2v3h-2zM529 447h2v3h-2zM535 447h2v3h-2zM532 451h2v3h-2zM535 451h2v3h-2zM529 455h2v3h-2zM532 455h2v3h-2zM535 455h2v3h-2zM526 459h2v3h-2zM538 459h2v3h-2zM545 435h2v3h-2zM548 435h2v3h-2zM551 435h2v3h-2zM545 439h2v3h-2zM548 439h2v3h-2zM551 439h2v3h-2zM545 443h2v3h-2zM548 443h2v3h-2zM551 443h2v3h-2zM545 447h2v3h-2zM548 447h2v3h-2zM551 447h2v3h-2zM545 451h2v3h-2zM548 451h2v3h-2zM551 451h2v3h-2zM542 455h2v3h-2zM548 455h2v3h-2zM554 455h2v3h-2zM542 459h2v3h-2zM545 459h2v3h-2zM551 459h2v3h-2zM554 459h2v3h-2z" fill="#94987c"/>
<path d="M484 435h2v3h-2zM481 439h2v3h-2zM484 439h2v3h-2zM484 443h2v3h-2zM484 447h2v3h-2zM484 451h2v3h-2zM484 455h2v3h-2zM481 459h2v3h-2zM484 459h2v3h-2zM487 459h2v3h-2zM494 435h2v3h-2zM497 435h2v3h-2zM500 435h2v3h-2zM503 435h2v3h-2zM506 435h2v3h-2zM494 439h2v3h-2zM494 443h2v3h-2zM497 443h2v3h-2zM500 443h2v3h-2zM503 443h2v3h-2zM506 447h2v3h-2zM506 451h2v3h-2zM494 455h2v3h-2zM506 455h2v3h-2zM497 459h2v3h-2zM500 459h2v3h-2zM503 459h2v3h-2zM513 455h2v3h-2zM516 455h2v3h-2zM513 459h2v3h-2zM516 459h2v3h-2zM529 435h2v3h-2zM532 435h2v3h-2zM535 435h2v3h-2zM526 439h2v3h-2zM538 439h2v3h-2zM526 443h2v3h-2zM535 443h2v3h-2zM538 443h2v3h-2zM526 447h2v3h-2zM532 447h2v3h-2zM538 447h2v3h-2zM526 451h2v3h-2zM529 451h2v3h-2zM538 451h2v3h-2zM526 455h2v3h-2zM538 455h2v3h-2zM529 459h2v3h-2zM532 459h2v3h-2zM535 459h2v3h-2zM542 435h2v3h-2zM554 435h2v3h-2zM542 439h2v3h-2zM554 439h2v3h-2zM542 443h2v3h-2zM554 443h2v3h-2zM542 447h2v3h-2zM554 447h2v3h-2zM542 451h2v3h-2zM554 451h2v3h-2zM545 455h2v3h-2zM551 455h2v3h-2zM548 459h2v3h-2z" fill="#000"/>
<rect x="300" y="480" width="42" height="23" fill="#ffffff" />
<rect x="300" y="480" width="40" height="21" fill="#a8a498" />
<rect x="301" y="481" width="39" height="20" fill="#6c6c64" />
<rect x="302" y="482" width="38" height="19" fill="#b4b400" />
<text x="304.5" y="495" font-size="12" fill="#000" font-weight="normal" text-anchor="start" >7.0</text>
<rect x="401" y="480" width="49" height="23" fill="#ffffff" />
<rect x="401" y="480" width="47" height="21" fill="#a8a498" />
<rect x="402" y="481" width="46" height="20" fill="#6c6c64" />
<rect x="403" y="482" width="45" height="19" fill="#b4b400" />
<text x="405.5" y="495" font-size="12" fill="#000" font-weight="normal" text-anchor="start" >15.0</text></svg>
</body></html>
